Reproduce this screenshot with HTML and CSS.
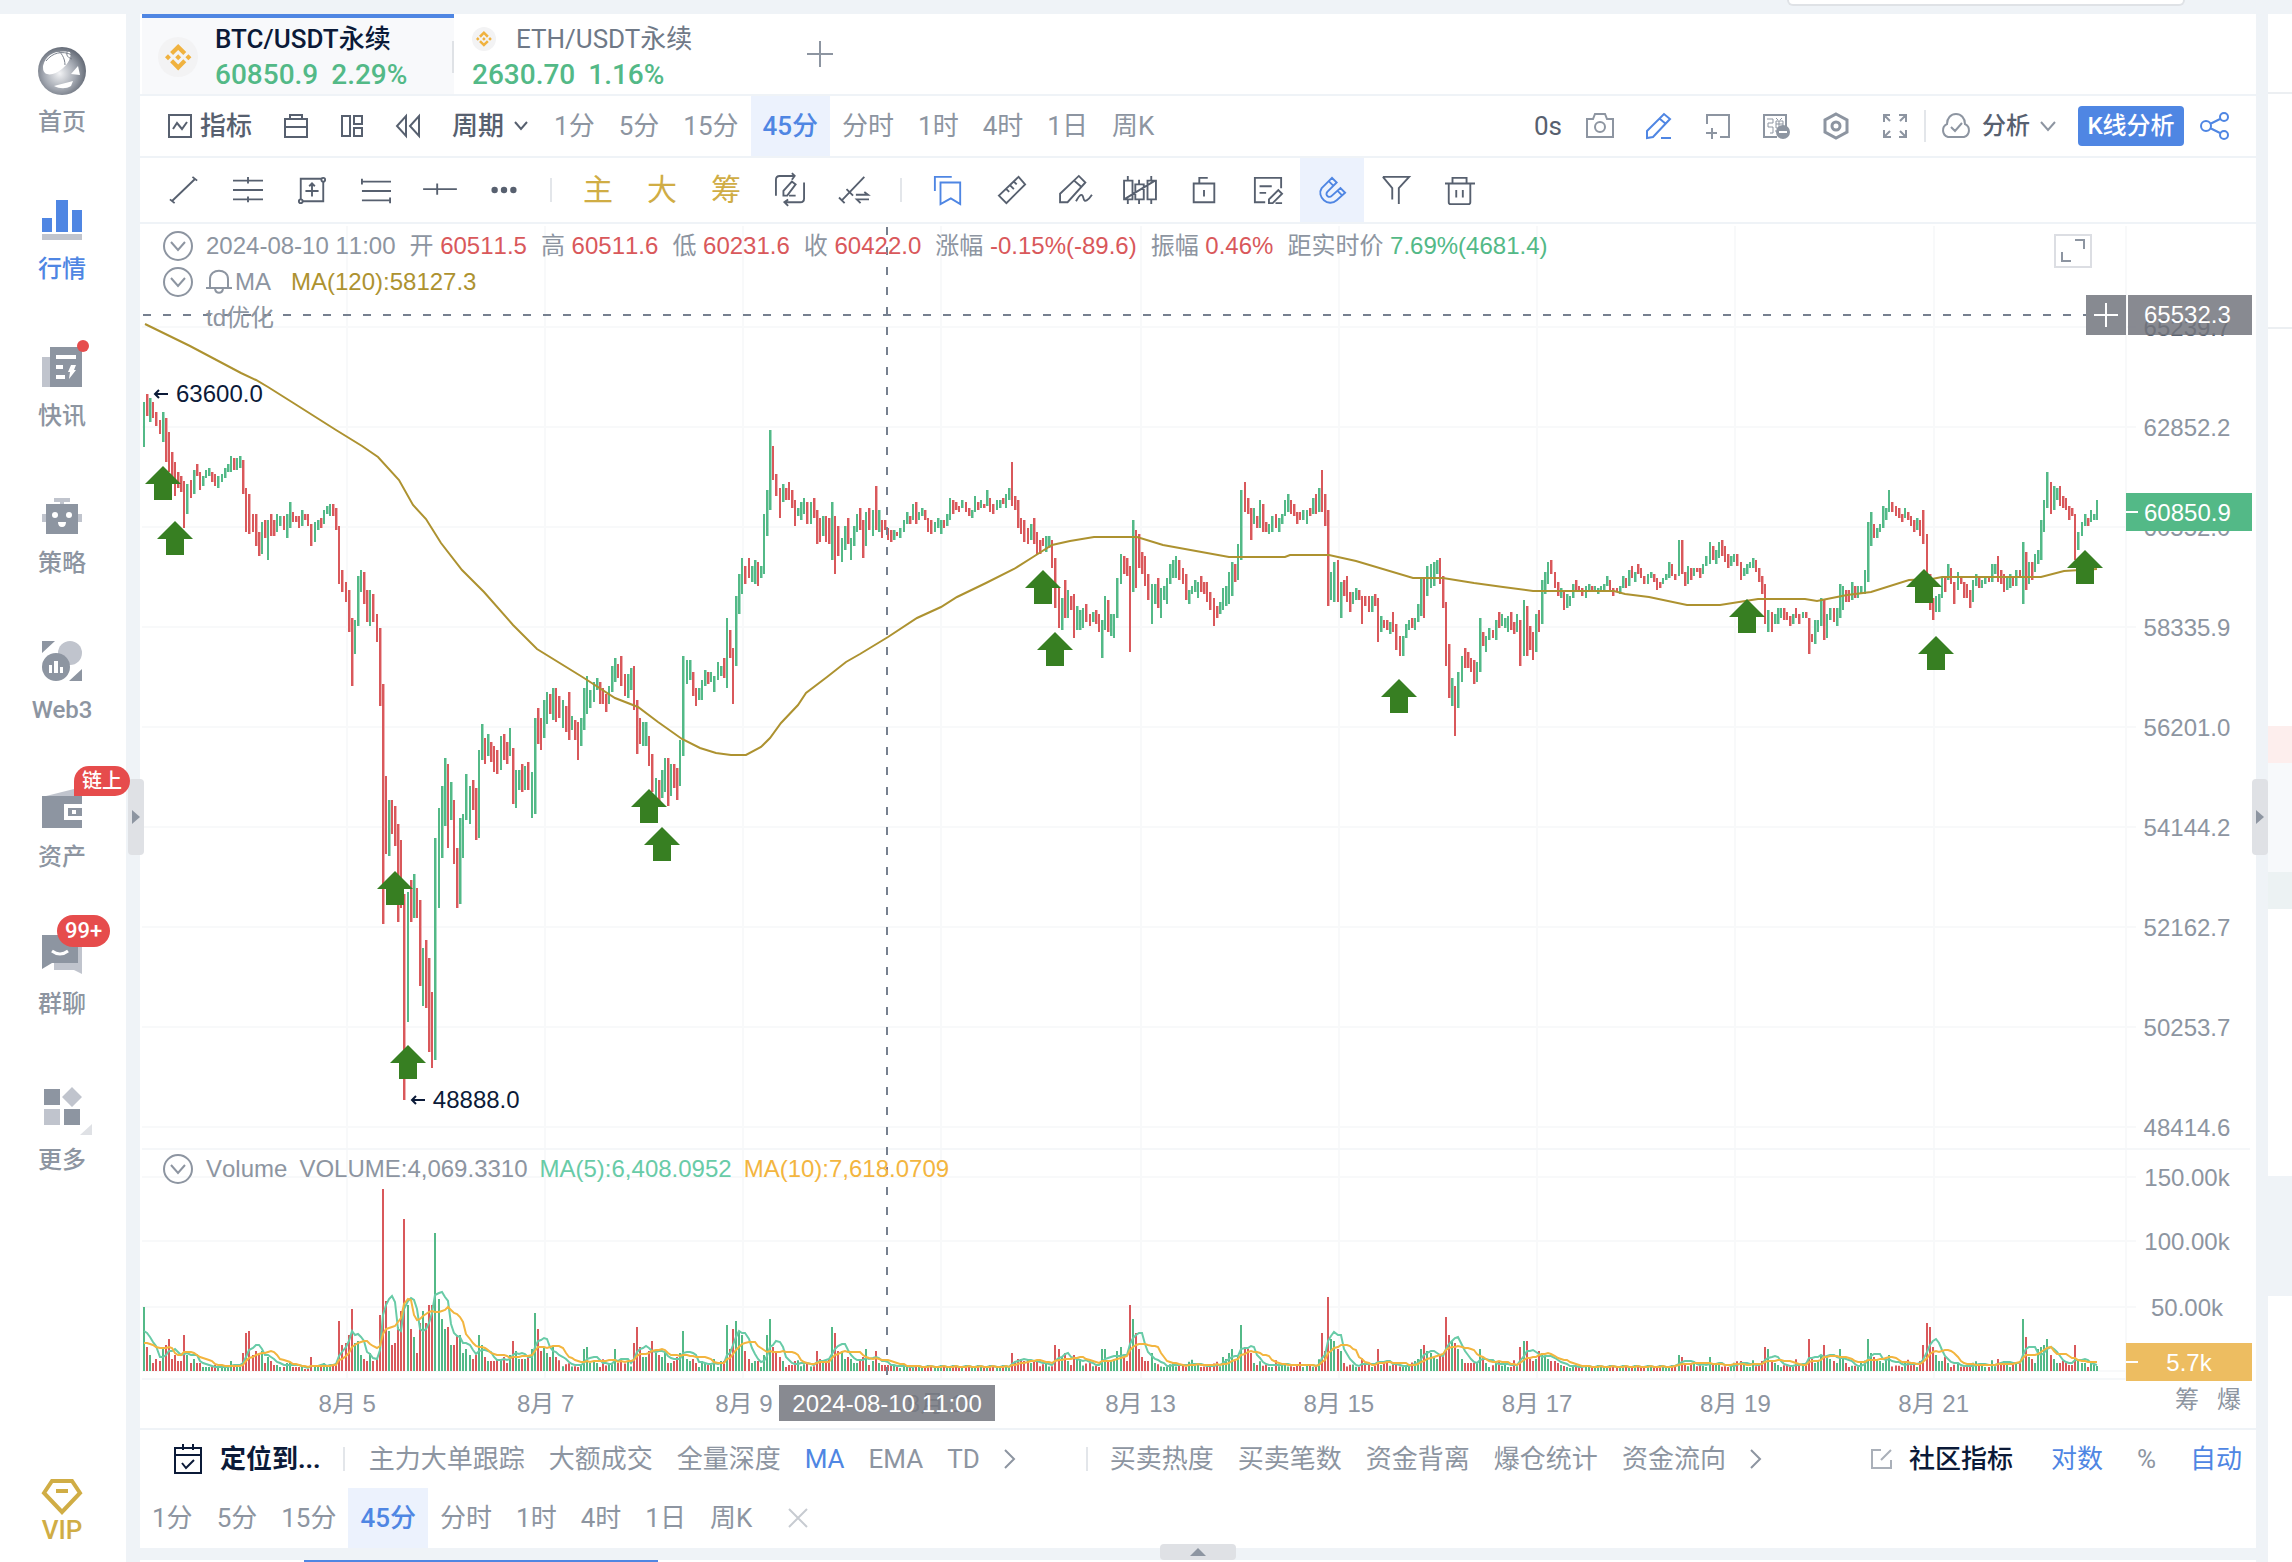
FILE: index.html
```html
<!DOCTYPE html>
<html lang="zh-CN">
<head>
<meta charset="utf-8">
<title>BTC/USDT永续 60850.9</title>
<link rel="stylesheet" href="styles.css">
</head>
<body>
<div class="app">
  <nav class="sidebar">
    <a class="nav-item" href="#home">
      <svg class="nav-logo" viewBox="0 0 48 48"><defs><radialGradient id="ball" cx="45%" cy="55%" r="60%"><stop offset="0" stop-color="#f2f3f5"/><stop offset=".55" stop-color="#a4a9b2"/><stop offset="1" stop-color="#59606c"/></radialGradient></defs><circle cx="24" cy="24" r="24" fill="url(#ball)"/><path d="M5 19C8 7 17 3 32 5c2 5-2 12-8 17-6 5-13 7-17 4-2-2-2-4-2-7z" fill="#fff"/><path class="thin" d="M8 14C14 6 24 3 34 8M19 3c4 2 8 8 8 15M30 2c-2 5-2 8 4 10" fill="none" stroke="#7b828d"/><path d="M40 19l2 9-9-1zM16 39c6-2 13-3 19-5l-2 5c-5 3-11 3-17 0z" fill="#fff"/></svg>
      <span>首页</span></a>
    <a class="nav-item active" href="#market">
      <svg class="nav-icon" viewBox="0 0 40 40"><path fill="#4f86e3" d="M0 18h10v14H0zM14 0h12v32H14zM30 10h10v22H30z"/><path fill="#c0c4cd" d="M0 34h40v6H0z"/></svg>
      <span>行情</span></a>
    <a class="nav-item" href="#news">
      <svg class="nav-icon" viewBox="0 0 40 40"><path fill="#c0c4cd" d="M0 10h8v30H0z"/><path fill="#8d95a1" d="M8 0h32v40H8z"/><path fill="#fff" d="M14 8h20v4H14zM14 18h7v4h-7zM14 28h9v4h-9zM29 18h5l-2 5h2l-7 9 1-7h-2z"/><circle cx="41" cy="-1" r="6" fill="#e64c4c"/></svg>
      <span>快讯</span></a>
    <a class="nav-item" href="#strategy">
      <svg class="nav-icon" viewBox="0 0 40 40"><path fill="#c0c4cd" d="M12 4h16v4h-6v3h-4V8h-6zM0 20h40v8H0z"/><path fill="#8d95a1" d="M4 10h32v30H4z"/><circle cx="13" cy="21" r="3" fill="#fff"/><circle cx="27" cy="21" r="3" fill="#fff"/><path fill="#fff" d="M16 28h8q0 5-4 5t-4-5z"/></svg>
      <span>策略</span></a>
    <a class="nav-item" href="#web3">
      <svg class="nav-icon" viewBox="0 0 40 40"><path fill="#8d95a1" d="M0 0h13L0 12zM40 28v12H27z"/><circle cx="28" cy="12" r="12" fill="#c0c4cd"/><circle cx="14" cy="26" r="14" fill="#8d95a1"/><path fill="#fff" d="M7 24h3v8H7zM12 20h4v12h-4zM18 26h3v6h-3z"/></svg>
      <span>Web3</span></a>
    <a class="nav-item" href="#assets">
      <svg class="nav-icon" viewBox="0 0 40 40"><path fill="#c0c4cd" d="M0 9L36 0v9z"/><path fill="#8d95a1" d="M0 8h40v32H0z"/><path fill="#fff" d="M22 16h18v16H22z"/><path fill="#8d95a1" d="M26 20h14v8H26z"/><path fill="#fff" d="M30 22h4v4h-4z"/></svg>
      <span>资产</span><b class="badge badge-chain">链上</b></a>
    <a class="nav-item" href="#chat">
      <svg class="nav-icon" viewBox="0 0 40 40"><path fill="#c0c4cd" d="M12 12h28v27l-8-4H12z"/><path fill="#8d95a1" d="M0 0h36v28H10L0 34z"/><path d="M10 16q8 6 16 0" fill="none" stroke="#fff"/></svg>
      <span>群聊</span><b class="badge badge-count">99+</b></a>
    <a class="nav-item nav-more" href="#more">
      <svg class="nav-icon" viewBox="0 0 40 40"><path fill="#8d95a1" d="M2 2h16v16H2zM22 22h16v16H22z"/><path fill="#c0c4cd" d="M2 22h16v16H2zM30 0l10 10-10 10-10-10z"/><path fill="#dfe1e5" d="M50 37v11H38z"/></svg>
      <span>更多</span></a>
    <a class="nav-vip" href="#vip">
      <svg class="nav-icon" viewBox="0 0 40 36"><path d="M10 2h20l8 12-18 19L2 14z" fill="none" stroke="#d0ad45"/><path d="M14 12h12" stroke="#d0ad45"/></svg>
      <span>VIP</span></a>
  </nav>

  <div class="center">
    <div class="search-edge"></div>
    <main class="panel">
      <header class="tabs">
        <a class="tab tab-active" href="#btc">
          <span class="coin coin-lg"><svg viewBox="0 0 24 24"><path id="bnb" d="M16.624 13.92l2.718 2.716-7.353 7.353-7.353-7.352 2.717-2.717 4.636 4.66 4.635-4.66zm4.637-4.636L24 12l-2.715 2.716L18.568 12l2.693-2.716zm-9.272 0l2.716 2.692-2.717 2.717L9.272 12l2.716-2.715zm-9.273 0L5.41 12l-2.692 2.692L0 12l2.716-2.716zM11.989.011l7.353 7.33-2.718 2.715-4.636-4.636-4.635 4.66-2.717-2.716z"/></svg></span>
          <span class="tab-text"><span class="tab-name">BTC/USDT永续</span><span class="tab-price"><span>60850.9</span><span>2.29%</span></span></span>
        </a>
        <a class="tab" href="#eth">
          <span class="tab-text"><span class="tab-name"><span class="coin coin-sm"><svg viewBox="0 0 24 24"><use href="#bnb"/></svg></span>ETH/USDT永续</span><span class="tab-price"><span>2630.70</span><span>1.16%</span></span></span>
        </a>
        <button class="add-tab" aria-label="添加"><svg width="26" height="26" viewBox="0 0 26 26"><path d="M13 0v26M0 13h26"/></svg></button>
      </header>

      <div class="toolbar">
        <button class="tool strong"><svg width="24" height="24" viewBox="0 0 24 24"><path d="M1 1h22v22H1zM5 15l4-6 5 6 5-7"/></svg>指标</button>
        <button class="tool strong" aria-label="交易"><svg width="24" height="24" viewBox="0 0 24 24"><path d="M1 5h22v18H1zM6 5V1h12v4M1 13h22"/></svg></button>
        <button class="tool strong" aria-label="布局"><svg width="24" height="24" viewBox="0 0 24 24"><path d="M2 2h8v20H2zM14 2h8v8h-8zM14 14h8v8h-8z"/></svg></button>
        <button class="tool strong" aria-label="回放"><svg width="24" height="24" viewBox="0 0 24 24"><path d="M10 2v20L1 12zM23 2v20l-9-10z"/></svg></button>
        <button class="tool strong tool-period">周期<svg width="14" height="10" viewBox="0 0 14 10"><path d="M1 1l6 7 6-7"/></svg></button>
        <div class="periods"><button>1分</button><button>5分</button><button>15分</button><button class="on">45分</button><button>分时</button><button>1时</button><button>4时</button><button>1日</button><button>周K</button></div>
        <div class="toolbar-right">
          <span class="strong">0s</span>
          <button aria-label="截图"><svg width="28" height="28" viewBox="0 0 28 28"><path d="M1 7h6l2-5h10l2 5h6v18H1z"/><circle cx="14" cy="15" r="5"/></svg></button>
          <button class="blue" aria-label="画线"><svg width="28" height="28" viewBox="0 0 28 28"><path d="M2 26v-7L19 2l6 5L8 25zM15 7l6 5M16 26h10"/></svg></button>
          <button aria-label="新窗口"><svg width="28" height="28" viewBox="0 0 28 28"><path d="M3 12V3h22v22h-9M2 21h11M8 16v11"/></svg></button>
          <button aria-label="弹幕"><svg width="28" height="28" viewBox="0 0 28 28"><path d="M14 25H1V3h22v12"/><path d="M4 7h6v4H5v4h5v6H7M13 6l2 2M19 6l-2 2M13 9h7v7h-7zM13 12h7M16 9v13M12 19h9" stroke-width="1"/><circle cx="20" cy="20" r="7" fill="#8d95a1" stroke="none"/><path d="M16 20h8" stroke="#fff"/></svg></button>
          <button aria-label="设置"><svg width="28" height="28" viewBox="0 0 28 28"><path d="M14 2l11 6v12l-11 6-11-6V8z" stroke-width="3"/><circle cx="14" cy="14" r="4" stroke-width="3"/></svg></button>
          <button aria-label="全屏"><svg width="28" height="28" viewBox="0 0 28 28"><path d="M3 10V3h6M3 3l6 6M18 3h7v7M25 3l-6 6M3 18v7h7M3 25l6-6M25 18v7h-7M25 25l-6-6"/></svg></button>
          <i class="divider tall"></i>
          <button class="analysis"><svg width="32" height="26" viewBox="0 0 32 26"><path d="M8 24a7 7 0 0 1-1-13C7 5 11 1 16 1s9 4 9 10a7 7 0 0 1-1 13zM11 14l4 4 7-8"/></svg><span>分析</span><svg width="16" height="10" viewBox="0 0 16 10"><path d="M1 1l7 8 7-8"/></svg></button>
          <button class="primary">K线分析</button>
          <button class="blue" aria-label="分享"><svg width="30" height="28" viewBox="0 0 30 28"><circle cx="6" cy="14" r="5"/><circle cx="24" cy="5" r="4"/><circle cx="24" cy="23" r="4"/><path d="M10 12l10-5M10 16l10 5"/></svg></button>
        </div>
      </div>

      <div class="drawbar">
        <button aria-label="线段"><svg viewBox="0 0 32 32"><path d="M3 28L28 4M1 26l5 4M25 2l5 4"/></svg></button>
        <button aria-label="水平线"><svg viewBox="0 0 32 32"><path d="M0 6h32M0 16h32M0 26h32M16 2v7M16 23v6"/></svg></button>
        <button aria-label="区域"><svg viewBox="0 0 32 32"><path d="M4 4h24v24H4zM16 9v14M9 17h14M13 12l3-3 3 3"/><circle cx="28" cy="5" r="2" fill="#fff"/><circle cx="4" cy="28" r="2" fill="#fff"/></svg></button>
        <button aria-label="斐波那契"><svg viewBox="0 0 32 32"><path d="M1 4v6M1 7h31M1 17h31M1 27h31M31 24v6"/></svg></button>
        <button aria-label="射线"><svg viewBox="0 0 32 32"><path d="M-2 15h36M13 9v12"/></svg></button>
        <button aria-label="更多工具"><svg viewBox="0 0 32 32"><g fill="#57606f" stroke="none"><circle cx="6" cy="16" r="3.4"/><circle cx="16" cy="16" r="3.4"/><circle cx="26" cy="16" r="3.4"/></g></svg></button>
        <i class="divider"></i>
        <button class="gold">主</button><button class="gold">大</button><button class="gold">筹</button>
        <button aria-label="重绘"><svg viewBox="0 0 32 32"><path d="M1 22V5q0-4 4-4h15M18-2l3 3-3 4M31 8v17q0 4-4 4H11M14 26l-4 3 4 4M9 22v-5l9-10 4 3-9 12zM15 22h7"/></svg></button>
        <button aria-label="切换"><svg viewBox="0 0 32 32"><path d="M3 27L27 2M0 24l6 6M8 15l7 7M18 21h13l-4-3M32 26H19l4 4"/></svg></button>
        <i class="divider"></i>
        <button class="blue" aria-label="收藏"><svg viewBox="0 0 32 32"><path d="M2 17V2h18M8 8h21v23l-10-6-11 6z"/></svg></button>
        <button aria-label="尺"><svg viewBox="0 0 32 32"><path d="M2 22L23 2l7 8L10 30zM18 7l3 3M14 11l4 4M10 15l3 3"/></svg></button>
        <button aria-label="笔"><svg viewBox="0 0 32 32"><path d="M-1 29v-9L19 1l7 7L7 29zM14 6l7 6M16 28c5-9 7-8 8-3s5 2 9-4"/></svg></button>
        <button aria-label="形态"><svg viewBox="0 0 32 32"><path d="M-1 6h9v20h-9zM11 10h9v16h-9zM24 6h9v20h-9zM3 1v5M3 26v5M15 5v5M15 26v5M28 1v5M28 26v5M-1 26L32 6"/></svg></button>
        <button aria-label="锁定"><svg viewBox="0 0 32 32"><path d="M5 9h22v20H5zM11 9V3h9M16 16v7"/></svg></button>
        <button aria-label="备注"><svg viewBox="0 0 32 32"><path d="M13 29H2V3h28v11M7 12h13M7 19h7M17 30v-4l10-10 4 4-10 10zM24 30h7"/></svg></button>
        <button class="blue on" aria-label="磁铁"><svg viewBox="0 0 32 32"><path d="M5 14L16 3l5 5-10 10c-3 4 2 7 5 4l9-8 5 5-9 8c-9 8-22-4-16-13zM12 6l5 5M22 17l5 5"/></svg></button>
        <button aria-label="筛选"><svg viewBox="0 0 32 32"><path d="M2 2h28L19 14v17M2 2l10 12v12"/></svg></button>
        <button aria-label="删除"><svg viewBox="0 0 32 32"><path d="M0 9h32M8 9V3h15v6M4 9v20q0 2 2 2h19q2 0 2-2V9M12 16v8M19 16v8"/></svg></button>
      </div>

      <section class="chart">
        <svg id="plot" class="plot" viewBox="140 224 2116 1156" preserveAspectRatio="none"></svg>

        <div class="legend">
          <p><svg class="fold" viewBox="0 0 30 30"><circle cx="15" cy="15" r="14"/><path d="M8 11l7 8 7-8"/></svg><span class="stamp">2024-08-10 11:00</span><span>开 <em>60511.5</em></span><span>高 <em>60511.6</em></span><span>低 <em>60231.6</em></span><span>收 <em>60422.0</em></span><span>涨幅 <em>-0.15%(-89.6)</em></span><span>振幅 <em>0.46%</em></span><span>距实时价 <em class="up">7.69%(4681.4)</em></span></p>
          <p><svg class="fold" viewBox="0 0 30 30"><circle cx="15" cy="15" r="14"/><path d="M8 11l7 8 7-8"/></svg><span class="bell"><svg viewBox="0 0 26 26"><path d="M4 19V10c0-11 18-11 18 0v9M0 19h26M9 20c1 5 7 5 8 0"/></svg>MA</span><span class="ma120">MA(120):58127.3</span></p>
          <p class="indent"><span>td优化</span></p>
        </div>
        <p class="legend legend-volume"><svg class="fold" viewBox="0 0 30 30"><circle cx="15" cy="15" r="14"/><path d="M8 11l7 8 7-8"/></svg><span>Volume</span><span>VOLUME:4,069.3310</span><span class="ma5">MA(5):6,408.0952</span><span class="ma10">MA(10):7,618.0709</span></p>
        <span class="extreme extreme-high"><svg viewBox="0 0 14 10"><path d="M14 5H1M5 1L1 5l4 4"/></svg>63600.0</span>
        <span class="extreme extreme-low"><svg viewBox="0 0 14 10"><path d="M14 5H1M5 1L1 5l4 4"/></svg>48888.0</span>
        <button class="maximize" aria-label="最大化"><svg width="34" height="30" viewBox="0 0 34 30"><path d="M19 4h9v9M6 16v9h9"/></svg></button>

        <div class="axis">
          <i></i><span class="near-cursor">65239.7</span><span>62852.2</span><span>60552.0</span><span>58335.9</span><span>56201.0</span><span>54144.2</span><span>52162.7</span><span>50253.7</span><span class="last">48414.6</span>
          <span class="v1">150.00k</span><span class="v2">100.00k</span><span class="v3">50.00k</span>
        </div>
        <div class="cursor-price"><button aria-label="添加提醒"><svg width="24" height="24" viewBox="0 0 24 24"><path d="M12 0v24M0 12h24"/></svg></button><span>65532.3</span></div>
        <span class="tag tag-last">60850.9</span>
        <span class="tag tag-volume">5.7k</span>
      </section>

      <div class="time-axis">
        <span class="first">8月 5</span><span>8月 7</span><span>8月 9</span><span>8月 11</span><span>8月 13</span><span>8月 15</span><span>8月 17</span><span>8月 19</span><span>8月 21</span>
        <div class="axis-toggles"><button>筹</button><button>爆</button></div>
        <span class="cursor-time">2024-08-10 11:00</span>
      </div>

      <div class="indicators">
        <button class="locate"><svg width="28" height="30" viewBox="0 0 28 30"><path d="M1 4h26v25H1zM1 11h26M9 0v6M19 0v6M8 19l4 5 8-8"/></svg>定位到...</button>
        <i class="divider"></i>
        <div class="group"><button>主力大单跟踪</button><button>大额成交</button><button>全量深度</button><button class="blue">MA</button><button>EMA</button><button>TD</button><button aria-label="下一页"><svg width="12" height="20" viewBox="0 0 12 20"><path d="M1 1l9 9-9 9"/></svg></button></div>
        <i class="divider second"></i>
        <div class="group"><button>买卖热度</button><button>买卖笔数</button><button>资金背离</button><button>爆仓统计</button><button>资金流向</button><button aria-label="下一页"><svg width="12" height="20" viewBox="0 0 12 20"><path d="M1 1l9 9-9 9"/></svg></button></div>
        <div class="scale"><button class="community"><svg width="22" height="20" viewBox="0 0 22 20"><path d="M10 1H1v18h19v-8M10 11L20 1"/></svg>社区指标</button><button class="blue">对数</button><button>%</button><button class="blue">自动</button></div>
      </div>
      <div class="bottom-periods">
        <div class="periods"><button>1分</button><button>5分</button><button>15分</button><button class="on">45分</button><button>分时</button><button>1时</button><button>4时</button><button>1日</button><button>周K</button></div>
        <button aria-label="关闭"><svg width="20" height="20" viewBox="0 0 20 20"><path d="M1 1l18 18M19 1L1 19"/></svg></button>
      </div>
      <button class="handle handle-left" aria-label="展开左栏"><svg viewBox="0 0 8 14"><path d="M0 0l8 7-8 7z"/></svg></button>
      <button class="handle handle-right" aria-label="展开右栏"><svg viewBox="0 0 8 14"><path d="M0 0l8 7-8 7z"/></svg></button>
      <button class="handle handle-bottom" aria-label="展开底栏"><svg viewBox="0 0 16 8"><path d="M0 8l8-8 8 8z"/></svg></button>
    </main>
    <div class="drawer"><div class="drawer-tab"></div></div>
  </div>

  <aside class="rail"><i class="r1"></i><i class="r2"></i><i class="ask"></i><i class="mid"></i><i class="bid"></i><i class="r3"></i><i class="block"></i></aside>
</div>
<script src="script.js"></script>
</body>
</html>
```

FILE: styles.css
```css
* { box-sizing: border-box; }
body { margin: 0; height: 100vh; overflow: hidden; background: #eff3f7; color: #8d95a1; font: 26px/32px Roboto, "Noto Sans CJK SC", sans-serif; }
p { margin: 0; }
a { color: inherit; text-decoration: none; }
em { font-style: normal; }
button { border: 0; margin: 0; padding: 0; background: none; color: inherit; font: inherit; white-space: nowrap; display: flex; align-items: center; justify-content: center; }
svg { display: block; flex: none; overflow: visible; fill: none; stroke: currentColor; stroke-width: 2; }

.app { display: flex; gap: 12px; height: 100%; }
.blue { color: #4f86e3; }
.strong { color: #57606f; font-weight: 500; }
.divider { flex: none; width: 2px; height: 24px; background: #e3e6ea; }
.divider.tall { height: 32px; }

/* Side navigation */
.sidebar { flex: none; width: 126px; margin-top: 14px; margin-right: 2px; padding-top: 1px; background: #fff; display: flex; flex-direction: column; }
.sidebar svg { stroke: none; }
.sidebar svg [stroke] { stroke-width: 3; }
.sidebar svg .thin { stroke-width: 1; }
.nav-item { position: relative; height: 147px; padding: 0 2px 25px 0; display: flex; flex-direction: column; align-items: center; justify-content: flex-end; gap: 14px; font-size: 24px; line-height: 30px; font-weight: 500; }
.nav-item.active { color: #4f86e3; }
.nav-more { height: 156px; gap: 18px; }
.nav-icon { width: 40px; height: 40px; }
.nav-logo { width: 48px; height: 48px; margin-bottom: -2px; }
.badge { position: absolute; color: #fff; background: #e64c4c; text-align: center; font-weight: 500; font-size: 20px; line-height: 30px; height: 30px; }
.badge-chain { left: 74px; top: 16px; width: 56px; border-radius: 15px 15px 15px 0; z-index: 2; }
.badge-count { left: 57px; top: 18px; width: 53px; height: 32px; line-height: 32px; border-radius: 16px; font-size: 22px; }
.nav-vip { margin-top: auto; padding: 0 2px 17px 0; display: flex; flex-direction: column; align-items: center; color: #d0ad45; font-size: 26px; line-height: 30px; font-weight: 500; }
.nav-vip .nav-icon { height: 36px; }
.nav-vip svg [stroke] { stroke-width: 4; }

/* Centre column */
.center { flex: 1; min-width: 0; display: flex; flex-direction: column; }
.search-edge { flex: none; height: 6px; width: 398px; margin: 0 71px 8px auto; background: #fff; border: 2px solid #dfe2e6; border-top: 0; border-radius: 0 0 6px 6px; }
.panel { position: relative; flex: 1; min-height: 0; background: #fff; display: flex; flex-direction: column; }
.drawer { flex: none; height: 2px; margin-top: 12px; background: #fff; }
.drawer-tab { width: 354px; height: 2px; margin-left: 164px; background: #4f86e3; }

.tabs { flex: none; height: 82px; padding-left: 2px; border-bottom: 2px solid #eff3f7; display: flex; }
.tab { display: flex; align-items: center; padding: 6px 0 0 18px; width: 312px; color: #6f7987; border-top: 0 solid #4f86e3; }
.tab-active { padding: 2px 0 0 16px; border-top-width: 4px; background: #f8f9fb; gap: 17px; color: #0b1a38; }
.tab-active .tab-name { font-weight: 500; }
.tab-active::after { content: ""; width: 2px; height: 32px; margin-left: auto; background: #dfe2e6; }
.tab-text { display: flex; flex-direction: column; gap: 4px; }
.tab-name { display: flex; align-items: center; }
.tab-price { display: flex; gap: 13px; color: #53b987; font-size: 28px; font-weight: 500; }
.coin { flex: none; border-radius: 50%; background: #f3f3f4; display: grid; place-items: center; }
.coin svg { fill: #f0b23f; stroke: none; width: 66%; }
.coin-lg { width: 40px; height: 40px; }
.coin-sm { width: 24px; height: 24px; margin-right: 20px; }
.add-tab { margin-left: 41px; }

.toolbar { flex: none; height: 62px; padding: 0 26px 0 28px; border-bottom: 2px solid #eff3f7; display: flex; align-items: stretch; }
.tool { margin-right: 32px; gap: 8px; }
.tool-period { margin-right: 14px; gap: 10px; }
.periods { display: flex; }
.periods button { padding: 0 12px; }
.periods .on { background: #ecf2fd; color: #4f86e3; font-weight: 500; }
.toolbar-right { margin-left: auto; display: flex; align-items: center; }
.toolbar-right > button { margin-left: 31px; }
.toolbar-right .strong { font-weight: 400; margin-right: -7px; }
.toolbar-right .divider { margin-left: 15px; }
.toolbar-right .analysis { margin-left: 14px; gap: 10px; font-size: 24px; }
.analysis span { color: #57606f; font-weight: 500; }
.toolbar-right .primary { margin-left: 22px; margin-right: -15px; width: 106px; height: 40px; border-radius: 4px; background: #4f86e3; color: #fff; font-size: 24px; font-weight: 500; }

.drawbar { flex: none; height: 66px; padding-left: 12px; border-bottom: 2px solid #eff3f7; display: flex; align-items: center; color: #57606f; }
.drawbar button { width: 64px; height: 64px; }
.drawbar svg { width: 30px; height: 30px; }
.drawbar .divider { margin: 0 14px; }
.drawbar .gold { color: #d0ad45; font-size: 30px; }
.drawbar .blue { color: #4f86e3; }
.drawbar .on { background: #ecf2fd; }

/* Chart */
.chart, .time-axis { position: relative; font-family: "Liberation Sans", "Noto Sans CJK SC", sans-serif; font-size: 24px; line-height: 28px; font-kerning: none; }
.chart { flex: 1; min-height: 0; display: grid; grid-template: minmax(0, 1fr) / minmax(0, 1fr) 130px; }
.plot { grid-area: 1 / 1 / 2 / 3; width: 100%; height: 100%; min-height: 0; stroke: none; overflow: hidden; }
.grid-lines { stroke: #f8f9fa; stroke-width: 2; }
.grid-borders { stroke: #f5f7f9; stroke-width: 2; }
.up-bars { fill: #53b987; } .up-bodies { fill: #a6dcc4; }
.down-bars { fill: #d9585b; } .down-bodies { fill: #efb2b4; }
.line-120 { stroke: #ad9230; } .line-5 { stroke: #68cba7; } .line-10 { stroke: #f3b53f; }
.cursor { stroke: #76808f; stroke-width: 2; }
.signals { fill: #377f22; }

.legend { position: absolute; left: 23px; top: 4px; white-space: nowrap; }
.legend p, .legend-volume { display: flex; align-items: center; gap: 14px; height: 36px; }
.legend .indent { padding-left: 43px; }
.legend em { color: #d9585b; } .legend em.up { color: #53b987; }
.fold { width: 30px; height: 30px; margin-right: -1px; }
.bell { display: flex; } .bell svg { width: 26px; height: 28px; margin-right: 3px; }
.ma120 { margin-left: 6px; color: #ad9230; }
.legend-volume { top: 80.2%; gap: 12px; }
.legend-volume .fold { margin-right: 1px; }
.ma5 { color: #68cba7; } .ma10 { color: #f3b53f; }
.extreme { position: absolute; display: flex; align-items: center; gap: 8px; color: #0b1a38; }
.extreme svg { width: 14px; height: 10px; }
.extreme-high { left: 14px; top: 13.5%; }
.extreme-low { left: 12.8%; top: 74.6%; }
.maximize { position: absolute; right: 164px; top: 10px; width: 38px; height: 34px; border: 2px solid #dcdee3; }
.axis { grid-area: 1 / 2; display: grid; align-items: center; justify-items: center; padding-right: 8px; grid-template-rows: 54fr repeat(8, 100fr) 25fr 50fr 50fr 7fr 64fr 68fr 38fr; }
.axis .near-cursor { color: #5d6674; }
.axis .last { grid-row: 11; } .axis .v1 { grid-row: 12; } .axis .v2 { grid-row: 14; } .axis .v3 { grid-row: 15; }
.cursor-price { position: absolute; right: 4px; top: 71px; display: flex; gap: 2px; height: 40px; line-height: 40px; color: #fff; }
.cursor-price button { width: 40px; background: #878a91; }
.cursor-price span { width: 124px; padding-left: 16px; background: #73767ed9; }
.tag { position: absolute; right: 4px; width: 126px; height: 38px; line-height: 40px; padding-left: 18px; color: #fff; background: linear-gradient(#fff, #fff) 0 50% / 12px 2px no-repeat #53b987; }
.tag-last { top: 23.3%; }
.tag-volume { bottom: -1px; padding: 0; text-align: center; background-color: #edbd61; }

.time-axis { flex: none; height: 50px; border-bottom: 2px solid #eff3f7; display: grid; grid-template-columns: 108fr repeat(9, 198fr) 93fr 130px; align-items: center; justify-items: center; }
.time-axis .first { grid-column: 2; }
.axis-toggles { grid-column: 12; justify-self: end; display: flex; gap: 18px; padding: 0 15px 8px 0; }
.cursor-time { position: absolute; left: 30.2%; top: 5px; width: 216px; height: 36px; line-height: 38px; text-align: center; color: #fff; background: #73767ed9; }

/* Lower rows */
.indicators { flex: none; height: 58px; padding: 0 14px 0 34px; display: flex; align-items: center; }
.locate { gap: 18px; color: #0b1a38; font-weight: 700; margin-right: 22px; }
.group { display: flex; gap: 24px; margin-left: 24px; }
.second { margin-left: 70px; }
.second + .group { margin-left: 22px; }
.scale { margin-left: auto; display: flex; gap: 34px; }
.community { gap: 16px; margin-right: 4px; color: #0b1a38; font-weight: 500; }
.community svg { color: #aab0b9; }
.bottom-periods { flex: none; height: 60px; display: flex; gap: 24px; }
.bottom-periods > button { color: #c7cbd1; }

.handle { position: absolute; background: #dfe1e5; color: #8d95a1; }
.handle svg { fill: currentColor; stroke: none; }
.handle-left, .handle-right { width: 16px; height: 76px; top: 49.9%; border-radius: 4px; }
.handle-left svg, .handle-right svg { width: 8px; height: 14px; }
.handle-left { left: -12px; } .handle-right { right: -12px; }
.handle-bottom { left: 48.2%; bottom: -12px; width: 76px; height: 16px; border-radius: 4px; }
.handle-bottom svg { width: 16px; height: 8px; }

/* Edge of the order-book column */
.rail { flex: none; width: 24px; margin-top: 14px; background: #fff; display: grid; grid-template-rows: 80fr 235fr 397fr 37fr 109fr 37fr 267fr 120fr 266fr; }
.rail i { grid-column: 1; }
.r1 { grid-row: 1; border-bottom: 2px solid #eceff2; }
.r2 { grid-row: 2; border-bottom: 2px solid #eceff2; }
.ask { grid-row: 4; background: #fdeeed; }
.mid { grid-row: 5; background: #f7f9fb; }
.bid { grid-row: 6; background: #ecf2f3; }
.r3 { grid-row: 7; }
.block { grid-row: 8; background: #eff3f7; }
```

FILE: script.js
```js
// 45-minute candles. Each token is direction, high and low; `top` and `scale` map a run to chart pixels.
const runs = [
  { top: 380, scale: 2.119, bars: `g47-143 r30-76 g38-89 r47-80 r68-97 r84-114 g68-131 r80-174 r110-195 r152-205 r174-246 r195-228 r203-237 r215-313 g220-284 r212-250 g191-242 r178-203 r195-233 g203-224 g191-208 g186-203 r195-216 r199-224 g203-229 g199-216 g186-208 g178-195 g161-195 r165-190 g165-191 g161-186 r169-242 r229-322 r242-326 r284-322 r284-352 r322-373 g301-369 r297-335 g297-381 r284-331 r297-331 g284-322 g288-309 r288-318 g284-335 g259-314 r280-301 r288-301 r288-314 g275-309 r284-297 r284-309 r305-352 g301-343 g297-318 r292-314 g275-305 g267-285 g263-288 r263-288 r271-318 r309-432 r403-449 r428-470 r445-534 r504-648 g509-581 g415-521 g403-449 r407-475 r445-513 g445-521 r453-513 r496-555 r525-691 r644-1153 r839-1004 g890-1009 r890-962 r903-987 r941-1148 r975-1118 r1090-1525 g1085-1360 r1059-1148 g1047-1140 r1076-1140 r1102-1284 g1204-1326 r1187-1331 r1225-1424 r1297-1458 g970-1441 g907-1118 g860-1013 g801-945 r814-992 g852-932 r890-1026 r992-1118 g928-1110 g920-1013 g835-932 g860-941 r848-911 r865-975 g784-970 g729-805 r759-814 g750-797 r767-809 r776-831 r784-835 g754-826 r750-805 r767-814 g737-797 r780-898 g826-907 g826-869 r814-873 g818-869 r809-869 g831-928 g716-920 r695-771 r716-784 g678-759 g661-729 r665-708 g653-720 r653-725 r670-716 g678-737 r691-746 r661-763 g712-742 r720-763 r725-805 g716-776 g653-742 g627-708 g657-695 g640-682 g631-657 r640-687 r653-687 r665-703 g648-687 g606-661 g589-640 r602-631 r585-648 r623-670 g623-674 g610-657 r606-699 r678-792 r716-771 g725-776 g725-776 r754-818 r792-873 g843-890 r848-903 g826-886 g801-873 r801-903 g814-881 r814-865 r822-890 g763-860 g585-797 g593-644 g593-636 r619-670 r653-691 g653-678 g636-678 g614-648 r619-644 g619-640 g627-661 g598-636 g606-627 r589-631 g504-653 r530-589 r568-687 g458-606 g411-496 g377-453 r394-432 r377-419 g394-428 g381-432 r386-436 g394-419 g284-411 g233-331 g106-275` },
  { top: 400, scale: 3, bars: `r138-240 r222-288 r264-354 g252-306 r264-300 r246-300 r270-324 r300-378 g324-348 g306-360 g294-342 r306-372 g306-372 r294-354 r330-432 r354-426 g348-408 r348-426 r354-432 g306-480 r348-522 r378-468 g414-486 g378-450 r354-432 g414-480 g378-438 g342-396 r324-390 r360-474 g336-438 r324-390 g330-408 r258-390 g330-396 r360-414 r360-390 r384-420 r390-426 g390-420 r396-408 g384-414 g360-396 g336-372 r348-372 g312-360 r306-372 g336-360 g324-348 r330-360 r354-396 r360-402 g366-396 g354-384 g360-402 r360-384 g342-378 g294-360 r300-342 r306-330 r318-336 g300-324 r306-336 r324-348 g330-354 g288-336 r306-330 g300-324 r312-324 g270-318 r294-336 r312-342 g300-330 g300-324 r294-312 g282-324 g264-300 r186-318 r288-330 r300-384 r354-402 r360-426 r384-432 g372-420 r354-432 r396-462 r420-462 r414-438 g408-456 g408-444 r420-504 r474-624 r564-684 g594-690 r540-654 g570-654 r588-630 r582-714 g618-690 g630-690 g624-684 r612-666 r642-678 g636-666 r630-672 r642-696 g660-774 g588-690 r600-696 g642-708 g642-714 g534-654 g462-552 r468-522 r474-528 r498-756 g360-576 r390-564 r402-504 r456-522 r468-558 r522-600 g552-672 g552-612 r534-624 g564-654 g558-600 g534-612 g492-552 g480-534 g468-534 r480-540 r504-552 r522-600 g570-612 g558-582 g540-576 g546-594 r528-576 r546-582 r546-606 r576-630 r594-678 r618-654 g606-642 g564-630 g558-618 g516-612 g486-588 r492-546 g432-540 g270-480 r246-336 r294-342 r324-420 g324-372 r348-384 g300-384 r312-396 r366-396 g372-402 g348-396 r342-384 g354-396 g342-372 g300-348 g282-336 r300-342 r312-348 r336-372 r336-360 g330-360 g330-372 r324-348 g294-342 r282-342 g264-336 r210-336 r282-378 r330-618 g516-600 g486-606 r480-606 g546-654 r540-588 r528-606 r576-636 g576-612 g564-600 r570-600 r588-672 r588-618 r588-636 g588-636 r582-618 r594-726 g648-696 r660-684 r660-690 g666-702 r636-696 r672-750 r708-768 g708-768` },
  { top: 440, scale: 3, bars: `g552-594 g540-570 r534-564 g534-570 g492-546 g414-528 r414-534 g378-468 g372-444 g366-438 g360-402 r354-432 r408-504 r486-678 r612-774 g714-798 r738-888 g696-804 g648-726 r624-684 r636-684 r654-696 r660-732 g666-726 g534-696 r576-618 g588-636 g564-600 r570-594 g540-600 r516-564 g522-558 g534-564 g528-576 r516-570 r546-582 g522-576 r540-678 g480-648 r498-648 r558-630 r576-660 g522-636 r510-576 g420-552 g396-462 g366-432 r360-402 r396-444 r426-468 g444-474 r456-510 g462-504 g468-498 g432-474 r420-450 r438-456 r444-468 g438-474 g432-450 r438-456 g438-450 g444-462 g438-456 g432-456 g408-438 r420-450 r444-468 r444-456 g438-462 g408-444 r414-444 g390-438 r378-414 g396-426 r372-402 r384-414 r408-432 g402-432 g396-414 r402-426 r414-450 r426-444 g414-432 g402-420 g366-414 r372-408 r402-420 g300-408 r300-402 r396-438 g378-432 r384-420 g384-408 r384-396 r384-414 g372-402 g348-378 g306-372 r318-360 g330-372 g306-354 r300-348 r318-366 r342-384 g348-378 g342-366 r342-378 r366-420 g384-408 g372-402 g366-384 g354-384 r360-396 r384-426 r408-462 r432-552 g510-576 r516-576 g522-552 g504-552 g504-534 r504-540 r516-540 r528-558 g522-552 r504-534 r522-552 g516-534 r516-534 r534-642 r582-606 g540-612 g540-576 g474-558 r480-600 g522-594 g504-540 r504-546 g504-558 g432-534 g438-510 r450-486 r450-486 g426-480 r438-474 g438-474 g438-462 g390-462 g246-426 g216-318 r252-294 g264-294 g252-276 g198-264 g204-240 g150-216 r186-216 r198-228 r204-234 r222-246 g204-234 r216-240 r228-258 r240-276 g234-270 r240-288 r210-312 r282-450 r402-510 r474-540 g468-516 g462-516 g414-474 r414-456 g372-420 r384-432 r426-492 g396-450 r408-432 r426-474 r432-474 r450-504 g420-486 g402-438 r414-444 g420-444 g414-432 r408-426 g372-426 g372-402 r348-426 r390-432 r402-456 g414-450 g402-444 r408-438 g390-438 r390-408 g306-492 r336-450 g366-432 r366-420 g342-396 g330-372 g240-360 g180-276 g96-204 r126-222 g138-210 g144-180 r138-198 r168-204 r174-210 r198-240 r204-228 r222-360 g276-330 g246-288 g222-258 r234-258 g210-246 g222-240 g180-240` }
];

// Volume bursts: start index followed by the bar heights. Bars outside a burst are quiet.
const bursts = {
  0: [64, 24, 16, 8, 12, 10, 22, 26, 32, 12, 16, 10, 10, 36, 16, 8, 12, 8, 8, 4, 4, 4, 4, 6, 4, 4, 4, 4, 10, 6, 4, 4, 18, 38, 40, 16, 20, 16, 20, 8, 14, 10, 6, 6, 4, 4, 8, 8, 4, 4, 4, 4, 2, 2, 14, 4, 4, 4, 8, 6, 6, 6, 8, 50, 26, 28, 36, 62, 28, 30, 16, 12, 10, 18, 10, 12, 56, 182, 70, 40, 26, 28, 44, 60, 152, 66, 42, 34, 18, 48, 60, 48, 66, 66, 138, 72, 52, 42, 44, 26, 26, 36, 36, 18, 22, 16, 12, 16, 36, 26, 14, 10, 10, 10, 12, 12, 14, 8, 16, 30, 20, 12, 12, 12, 14, 22, 58, 42, 20, 24, 18, 14, 24, 14],
  142: [22, 24, 8, 10, 8], 152: [22, 8, 12], 158: [28, 44, 24, 14, 14, 20, 30, 18, 16, 14, 18, 8, 8, 10, 14, 18, 40, 12, 10, 12, 8, 4, 10, 8, 6, 6, 12, 4, 10, 10, 46, 22, 42, 50, 40, 36, 20, 12, 8, 10, 10, 4, 16, 36, 52, 24, 20, 14, 10, 4, 6, 6, 10],
  217: [20, 12, 8, 10, 12, 44, 38, 20, 20, 12, 14, 12, 8, 8, 12, 14, 22, 6, 10, 20, 8, 6, 6, 6], 280: [18, 10, 12, 12, 10, 12, 8, 10],
  294: [26, 22, 14, 18, 10, 6, 16, 12], 309: [22, 22, 10, 10, 12, 20, 24, 14, 10, 66, 52, 38, 22, 14, 10, 10, 18, 8], 348: [14, 12, 18, 22, 10, 14, 46, 24, 22, 18, 8, 6], 380: [38, 20, 74, 32, 30, 22, 20, 8], 398: [22, 6, 10, 8],
  410: [10, 12, 22, 26, 20, 18, 14, 12, 16, 16, 54, 36, 30, 28, 22, 12, 8, 8, 8, 8, 8, 22, 14, 8], 444: [24, 30, 30, 12, 10, 12, 20, 18, 14, 12, 10, 10, 8, 6], 495: [16, 14, 8], 505: [14, 6, 8], 515: [10, 6],
  521: [6, 10, 24, 22, 10, 8, 6, 4], 537: [32, 12, 8, 10, 16, 26, 14, 12, 10, 8, 22, 12], 556: [32, 18, 14, 12, 10, 8, 12, 16], 573: [10, 26, 48, 44, 24, 16, 10, 10, 14, 8], 598: [12, 8, 10, 10], 605: [10, 52, 34, 14, 12, 8, 22, 24, 26, 32, 16, 12, 8, 8, 10, 8, 6, 6, 26, 10, 8, 8, 4, 8, 6, 5]
};

const ma120 = '145,324 190,346 241,373 256,380 268,387 295,404 336,430 362,446 378,457 399,480 413,505 426,519 441,543 462,570 484,592 513,625 537,649 584,678 615,698 638,707 658,722 682,739 700,748 716,753 731,755 746,755 761,747 770,738 781,723 798,705 806,693 827,677 846,662 860,654 888,637 917,618 941,607 957,597 986,583 1014,569 1033,557 1052,545 1070,541 1094,537 1137,537 1163,545 1196,551 1229,557 1285,557 1290,555 1329,555 1356,561 1413,578 1443,578 1474,583 1503,587 1533,591 1614,591 1625,594 1649,597 1687,605 1720,605 1758,599 1805,599 1817,601 1847,595 1871,592 1909,580 1932,579 1942,577 2041,577 2064,571 2097,569';
const signals = [[163, 466], [175, 521], [395, 871], [408, 1045], [649, 789], [662, 827], [1043, 570], [1055, 632], [1399, 679], [1747, 599], [1924, 569], [1936, 636], [2085, 550]];

const LEFT = 144, PITCH = 3.1, VOLUME_BASE = 1371;
const xOf = i => Math.round(LEFT + PITCH * i);

const candles = runs.flatMap(run => run.bars.split(' ').map(token => {
  const [high, low] = token.slice(1).split('-').map(v => Math.round(run.top + v / run.scale));
  return { up: token[0] === 'g', high, low };
}));

const volume = candles.map((c, i) => {
  const calm = (i > 238 && i < 280) || (i > 456 && i < 495);
  return calm ? 3 + (i * 7) % 4 : 4 + (i * 37 % 11) * (i * 13 % 7) / 7;
});
for (const [start, heights] of Object.entries(bursts)) heights.forEach((h, k) => { volume[+start + k] = h; });

const shapes = { upBars: '', upBodies: '', downBars: '', downBodies: '' };
candles.forEach((c, i) => {
  const x = xOf(i) - 1, side = c.up ? 'up' : 'down', top = VOLUME_BASE - volume[i];
  shapes[side + 'Bars'] += `M${x} ${c.high}h2V${c.low}h-2zM${x} ${top}h2V${VOLUME_BASE}h-2z`;
  if (i % 5 !== 0 && i % 5 !== 3) shapes[side + 'Bodies'] += `M${x + 2} ${c.high}h1V${c.low}h-1z`;
});

function average(span, seed) {
  const history = Array(span).fill(seed).concat(volume);
  return volume.map((_, i) => {
    const mean = history.slice(i + 1, i + 1 + span).reduce((a, b) => a + b) / span;
    return `${xOf(i)},${Math.round(VOLUME_BASE - mean)}`;
  }).join(' ');
}

const vertical = [347, 545, 743, 941, 1141, 1339, 1537, 1735, 1934, 2126].map(x => `M${x} 226V1380`).join('');
const horizontal = [327, 427, 527, 627, 727, 827, 927, 1027, 1127, 1177, 1241, 1307, 1371].map(y => `M142 ${y}H2136`).join('');
const arrows = signals.map(([x, y]) => `M${x} ${y}l18 18h-9v16h-18v-16h-9z`).join('');

document.getElementById('plot').innerHTML = `
  <path class="grid-lines" d="${vertical}${horizontal}"/>
  <path class="grid-borders" d="M142 1149H2250M142 1379H2250"/>
  <path class="up-bodies" d="${shapes.upBodies}"/><path class="down-bodies" d="${shapes.downBodies}"/>
  <path class="up-bars" d="${shapes.upBars}"/><path class="down-bars" d="${shapes.downBars}"/>
  <polyline class="line-5" points="${average(5, 34)}"/>
  <polyline class="line-10" points="${average(10, 24)}"/>
  <polyline class="line-120" points="${ma120}"/>
  <path class="signals" d="${arrows}"/>
  <path class="cursor" stroke-dasharray="8 12" d="M887 227V1376M143 315H2126"/>`;
```
